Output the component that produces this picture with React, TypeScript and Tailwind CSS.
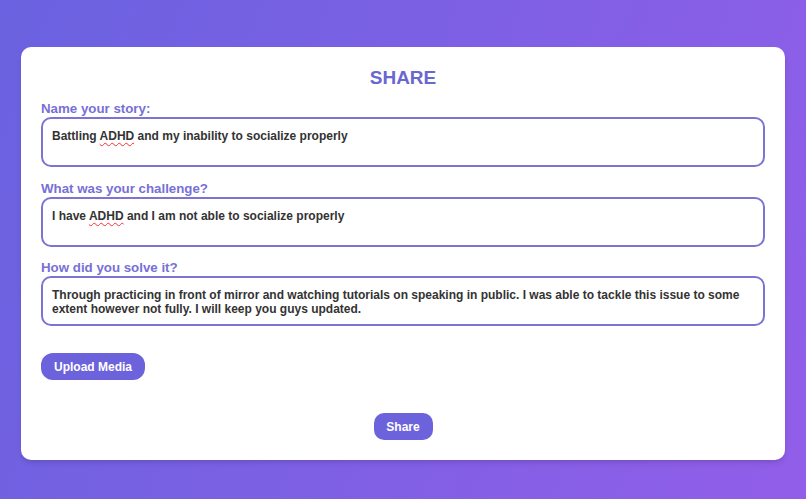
import React from "react";

const Field: React.FC<{ label: string; children: React.ReactNode }> = ({ label, children }) => (
  <div className="flex flex-col">
    <label className="text-[13.3px] leading-[17px] font-bold text-[#7770d6]">{label}</label>
    <div className="h-[50px] rounded-[10px] border-2 border-[#7b74d4] px-[9px] pt-[11px] text-[12px] leading-[13.5px] font-bold text-[#333]">
      {children}
    </div>
  </div>
);

const Spell: React.FC<{ children: React.ReactNode }> = ({ children }) => (
  <span className="underline decoration-wavy decoration-red-500 decoration-1 underline-offset-2">{children}</span>
);

export default function App() {
  return (
    <div
      className="min-h-screen w-full bg-[linear-gradient(110deg,#6a62e0,#925ee9)] px-[21px] pt-[47px] pb-[40px]"
      style={{ fontFamily: '"Liberation Sans", Arial, sans-serif' }}
    >
      <div className="flex flex-col rounded-[10px] bg-white px-[20px] pt-[20px] pb-[20px] shadow-md">
        <h1 className="text-center text-[19px] leading-[22px] font-bold text-[#6a67cf]">SHARE</h1>
        <div className="mt-[11px] flex flex-col gap-[12.5px]">
          <Field label="Name your story:">
            Battling <Spell>ADHD</Spell> and my inability to socialize properly
          </Field>
          <Field label="What was your challenge?">
            I have <Spell>ADHD</Spell> and I am not able to socialize properly
          </Field>
          <Field label="How did you solve it?">
            Through practicing in front of mirror and watching tutorials on speaking in public. I was able to tackle this issue to some extent however not fully. I will keep you guys updated.
          </Field>
        </div>
        <div className="mt-[27px]">
          <button className="h-[27px] w-[104px] rounded-[12px] bg-[#6c63dc] text-[12px] font-bold text-white">
            Upload Media
          </button>
        </div>
        <div className="mt-[33px] flex justify-center">
          <button className="h-[27px] w-[59px] rounded-[10px] bg-[#6c63dc] text-[12px] font-bold text-white">
            Share
          </button>
        </div>
      </div>
    </div>
  );
}
